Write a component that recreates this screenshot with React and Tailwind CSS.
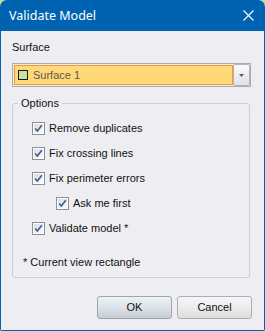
import React from "react";

function CheckBox() {
  return (
    <svg width="13" height="13" viewBox="0 0 13 13" className="shrink-0">
      <defs>
        <linearGradient id="cbg" x1="0" y1="0" x2="1" y2="1">
          <stop offset="0" stopColor="#d9dbe0" />
          <stop offset="1" stopColor="#fbfbfb" />
        </linearGradient>
      </defs>
      <rect x="0.5" y="0.5" width="12" height="12" fill="#ffffff" stroke="#8e8f8f" />
      <rect x="2" y="2" width="9" height="9" fill="url(#cbg)" />
      <path d="M3.2 6.4 L5.4 9 L9.8 3.2" fill="none" stroke="#3a5d8c" strokeWidth="1.6" />
    </svg>
  );
}

function Row({ label, indent }) {
  return (
    <div className={"flex items-center h-[25px] gap-[4px] " + (indent ? "pl-[43px]" : "pl-[19px]")}>
      <CheckBox />
      <span>{label}</span>
    </div>
  );
}

export default function App() {
  const font = { fontFamily: '"Liberation Sans", Arial, sans-serif' };
  return (
    <div className="w-[265px] h-[331px] bg-[#c9d99a]">
      <div className="w-full h-full flex flex-col bg-[#0063b1] rounded-t-[7px] rounded-b-[2px] overflow-hidden">
        <div className="h-[31px] shrink-0 flex items-center justify-between pl-[9px] pr-[11px] text-white">
          <span className="text-[12.5px] leading-[16px]" style={{ fontFamily: '"Noto Sans", "Open Sans", sans-serif' }}>
            Validate Model
          </span>
          <svg width="11" height="11" viewBox="0 0 11 11">
            <path d="M0.5 0.5 L10.5 10.5 M10.5 0.5 L0.5 10.5" stroke="#ffffff" strokeWidth="1.1" />
          </svg>
        </div>
        <div className="flex-1 mx-[1px] mb-[1px] bg-[#eeeef2] flex flex-col pl-[11px] pt-[10px] text-[11px] leading-[13px] text-[#111]" style={font}>
          <div>Surface</div>
          <div className="mt-[9px] w-[239px] h-[24px] border border-[#a9abb0] flex">
            <div className="flex-1 p-[1px] pr-0">
              <div className="h-full border border-[#f4992c] bg-[#ffd87a] flex items-center pl-[3px] gap-[5px]">
                <div className="w-[10px] h-[10px] border border-[#1a1a1a] bg-[#c6e2a0]" />
                <span className="text-[#5f5a4c]">Surface 1</span>
              </div>
            </div>
            <div className="w-[17px] h-full border border-[#b5b5b5] rounded-[2px] bg-gradient-to-b from-[#fbfbfb] to-[#dfe1e5] flex items-center justify-center">
              <svg width="5" height="3" viewBox="0 0 5 3">
                <path d="M0 0 L5 0 L2.5 3 Z" fill="#5a5a5a" />
              </svg>
            </div>
          </div>
          <fieldset className="mt-[10px] w-[238px] border border-[#cdcdd3] rounded-[3px] pt-[6px] pb-[8px]">
            <legend className="ml-[5px] px-[3px]">Options</legend>
            <Row label="Remove duplicates" />
            <Row label="Fix crossing lines" />
            <Row label="Fix perimeter errors" />
            <Row label="Ask me first" indent />
            <Row label="Validate model *" />
            <div className="mt-[15px] pl-[10px]">* Current view rectangle</div>
          </fieldset>
          <div className="mt-[18px] flex justify-end gap-[5px] pr-[12px]">
            <button className="w-[75px] h-[23px] border border-[#9ea5ad] rounded-[3px] bg-gradient-to-b from-[#eef2f6] via-[#dde3ea] to-[#c5ccd4] text-[#111]" style={font}>
              OK
            </button>
            <button className="w-[75px] h-[23px] border border-[#aeaeae] rounded-[3px] bg-gradient-to-b from-[#f6f6f6] via-[#ececec] to-[#dcdcdc] text-[#111]" style={font}>
              Cancel
            </button>
          </div>
        </div>
      </div>
    </div>
  );
}
